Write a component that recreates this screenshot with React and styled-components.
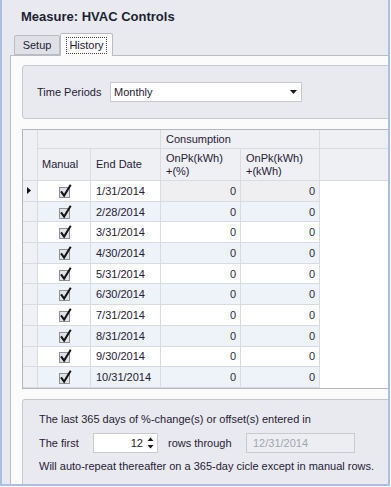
import React from 'react';
import styled, { createGlobalStyle } from 'styled-components';

const GlobalStyle = createGlobalStyle`
  html, body { margin: 0; padding: 0; background: #ffffff; }
  * { box-sizing: border-box; }
`;

const FONT = `"Liberation Sans", Arial, sans-serif`;
const TEXT = '#1f2037';
const LINE = '#d9dbe1';

const Frame = styled.div`
  width: 390px;
  height: 486px;
  overflow: hidden;
  background: #e9eaef;
  border: 2px solid #a9bfe4;
  border-top: none;
  font-family: ${FONT};
  font-size: 11px;
  color: ${TEXT};
  display: flex;
  flex-direction: column;
`;

const Title = styled.div`
  height: 32px;
  padding-left: 19px;
  display: flex;
  align-items: center;
  font-size: 13px;
  font-weight: bold;
  color: #1b1f33;
`;

const TabStrip = styled.div`
  height: 23px;
  display: flex;
  align-items: flex-end;
  padding-left: 12px;
`;

const Tab = styled.div`
  height: ${p => (p.$active ? 23 : 20)}px;
  width: ${p => p.$w}px;
  margin-bottom: ${p => (p.$active ? -1 : 0)}px;
  position: relative;
  z-index: ${p => (p.$active ? 2 : 1)};
  background: ${p => (p.$active ? '#fbfbfc' : '#dfe1e7')};
  border: 1px solid #b9bcc4;
  border-bottom: ${p => (p.$active ? 'none' : '1px solid #b9bcc4')};
  border-radius: 2px 2px 0 0;
  display: flex;
  align-items: ${p => (p.$active ? 'flex-start' : 'center')};
  padding-top: ${p => (p.$active ? 3 : 0)}px;
  justify-content: center;
  color: #3a3b4c;
`;

const TabLabel = styled.span`
  padding: 1px 2px;
  line-height: 13px;
  border: 1px dotted ${p => (p.$focus ? '#444' : 'transparent')};
  color: ${TEXT};
`;

const TabPage = styled.div`
  flex: 1;
  margin-left: 8px;
  border-top: 1px solid #b9bcc4;
  border-left: 1px solid #b9bcc4;
  background: #fbfbfc;
  padding: 9px 0 0 11px;
  display: flex;
  flex-direction: column;
  min-height: 0;
`;

const Panel = styled.div`
  background: #e9eaef;
  border: 1px solid #c6c8ce;
  border-radius: 3px;
  margin-right: -8px;
`;

const FilterPanel = styled(Panel)`
  height: 54px;
  display: flex;
  align-items: center;
  padding-left: 14px;
`;

const FieldLabel = styled.span`
  width: ${p => p.$w}px;
  flex: none;
  white-space: nowrap;
`;

const Select = styled.div`
  width: 192px;
  height: 20px;
  background: #ffffff;
  border: 1px solid #c8cad0;
  display: flex;
  align-items: center;
  justify-content: space-between;
  padding: 0 4px 0 3px;
`;

const Grid = styled.div`
  margin-top: 10px;
  height: 260px;
  margin-right: -8px;
  border: 1px solid #b5b7bd;
  background: #ffffff;
  display: flex;
  flex-direction: column;
`;

const COLS = '15px 53px 70px 80px 79px 1fr';

const Header = styled.div`
  display: grid;
  grid-template-columns: ${COLS};
  grid-template-rows: 19px 32px;
  background: #eff0f4;
`;

const HCell = styled.div`
  grid-column: ${p => p.$col};
  grid-row: ${p => p.$row};
  border-right: 1px solid ${LINE};
  border-bottom: 1px solid ${LINE};
  display: flex;
  align-items: center;
  padding-left: ${p => p.$pl ?? 4}px;
  line-height: 13px;
  white-space: pre;
`;

const Row = styled.div`
  display: grid;
  grid-template-columns: ${COLS};
  height: 20.7px;
`;

const Cell = styled.div`
  background: ${p => p.$bg};
  border-right: 1px solid ${LINE};
  border-bottom: 1px solid ${LINE};
  display: flex;
  align-items: center;
  justify-content: ${p => p.$align || 'flex-start'};
  padding: 0 4px 0 5px;
`;

const Indicator = styled(Cell)`
  background: #f0f1f5;
  padding: 0 0 0 4px;
`;

const Filler = styled.div`
  background: #ffffff;
`;

const Num = styled.span`
  color: #2c2c3a;
`;

const InfoPanel = styled(Panel)`
  margin-top: 10px;
  flex: 1;
  border-bottom: none;
  border-radius: 3px 3px 0 0;
  padding: 12px 0 0 16px;
  display: flex;
  flex-direction: column;
`;

const InfoLine = styled.div`
  height: 14px;
  line-height: 14px;
  margin-top: ${p => p.$mt || 0}px;
  white-space: nowrap;
`;

const InfoRow = styled.div`
  height: 20px;
  margin-top: 7px;
  display: flex;
  align-items: center;
`;

const Spinner = styled.div`
  width: 65px;
  height: 20px;
  background: #ffffff;
  border: 1px solid #c8cad0;
  display: flex;
  align-items: center;
  justify-content: flex-end;
  padding-right: 3px;
  gap: 4px;
  margin-right: 10px;
`;

const DateBox = styled.div`
  width: 109px;
  height: 20px;
  border: 1px solid #c8cad0;
  background: #eceef2;
  color: #a3a5ad;
  display: flex;
  align-items: center;
  padding-left: 6px;
`;

const Check = () => (
  <svg width="14" height="14" viewBox="0 0 14 14">
    <rect x="1.5" y="3.5" width="10" height="10" fill="#e2e3e8" stroke="#8f9097" />
    <path d="M3.6 8.2 L6.1 11.6 L12.2 1.6" stroke="#141414" strokeWidth="2" fill="none" strokeLinecap="square" />
  </svg>
);

const Arrow = () => (
  <svg width="7" height="4" viewBox="0 0 7 4">
    <path d="M0 0 H7 L3.5 4 Z" fill="#1a1a1a" />
  </svg>
);

const SpinArrows = () => (
  <svg width="7" height="14" viewBox="0 0 7 14">
    <path d="M0.5 5 H6.5 L3.5 1.5 Z" fill="#1a1a1a" />
    <path d="M0.5 9 H6.5 L3.5 12.5 Z" fill="#1a1a1a" />
  </svg>
);

const RowMark = () => (
  <svg width="5" height="7" viewBox="0 0 5 7">
    <path d="M0 0 L4 3.5 L0 7 Z" fill="#111" />
  </svg>
);

const dates = [
  '1/31/2014', '2/28/2014', '3/31/2014', '4/30/2014', '5/31/2014',
  '6/30/2014', '7/31/2014', '8/31/2014', '9/30/2014', '10/31/2014',
];

export default function App() {
  return (
    <>
      <GlobalStyle />
      <Frame>
        <Title>Measure: HVAC Controls</Title>
        <TabStrip>
          <Tab $w={46}><TabLabel>Setup</TabLabel></Tab>
          <Tab $w={53} $active><TabLabel $focus>History</TabLabel></Tab>
        </TabStrip>
        <TabPage>
          <FilterPanel>
            <FieldLabel $w={73}>Time Periods</FieldLabel>
            <Select>
              <span>Monthly</span>
              <Arrow />
            </Select>
          </FilterPanel>
          <Grid>
            <Header>
              <HCell $col="1" $row="1 / span 2" />
              <HCell $col="2 / span 2" $row="1" />
              <HCell $col="4 / span 2" $row="1" $pl={5}>Consumption</HCell>
              <HCell $col="6" $row="1" />
              <HCell $col="2" $row="2">Manual</HCell>
              <HCell $col="3" $row="2" $pl={5}>End Date</HCell>
              <HCell $col="4" $row="2" $pl={5}>{'OnPk(kWh)\n+(%)'}</HCell>
              <HCell $col="5" $row="2" $pl={5}>{'OnPk(kWh)\n+(kWh)'}</HCell>
              <HCell $col="6" $row="2" />
            </Header>
            {dates.map((d, i) => {
              const bg = i % 2 === 1 ? '#eef2f9' : '#ffffff';
              const numBg = i === 0 ? '#efeff1' : bg;
              return (
                <Row key={d}>
                  <Indicator>{i === 0 && <RowMark />}</Indicator>
                  <Cell $bg={bg} $align="center"><Check /></Cell>
                  <Cell $bg={bg}>{d}</Cell>
                  <Cell $bg={numBg} $align="flex-end"><Num>0</Num></Cell>
                  <Cell $bg={numBg} $align="flex-end"><Num>0</Num></Cell>
                  <Filler />
                </Row>
              );
            })}
          </Grid>
          <InfoPanel>
            <InfoLine>The last 365 days of %-change(s) or offset(s) entered in</InfoLine>
            <InfoRow>
              <FieldLabel $w={54}>The first</FieldLabel>
              <Spinner>
                <span>12</span>
                <SpinArrows />
              </Spinner>
              <FieldLabel $w={78}>rows through</FieldLabel>
              <DateBox>12/31/2014</DateBox>
            </InfoRow>
            <InfoLine $mt={6}>Will auto-repeat thereafter on a 365-day cicle except in manual rows.</InfoLine>
          </InfoPanel>
        </TabPage>
      </Frame>
    </>
  );
}
